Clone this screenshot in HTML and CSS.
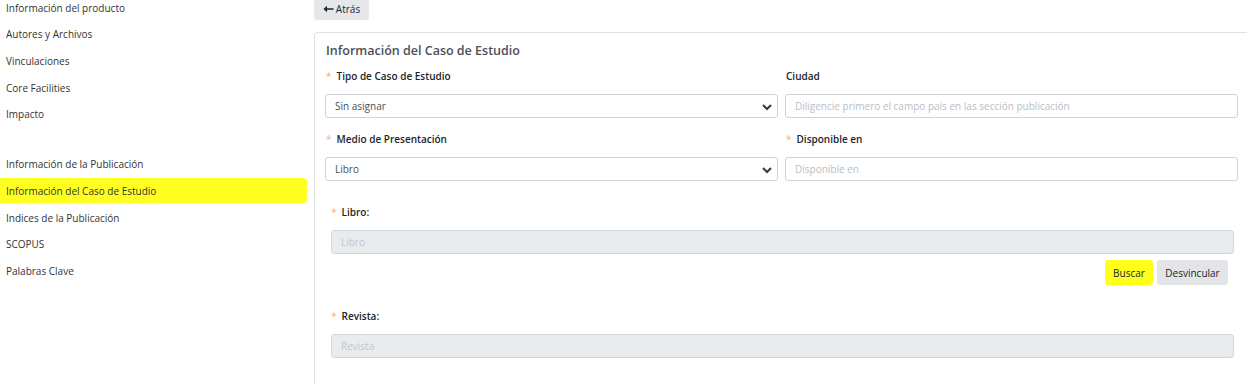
FILE: index.html
```html
<!DOCTYPE html>
<html lang="es">
<head>
<meta charset="utf-8">
<title>Información del Caso de Estudio</title>
<link rel="stylesheet" href="styles.css">
</head>
<body>
<div class="layout">
  <nav class="sidebar">
    <ul class="menu">
      <li class="menu-item">Información del producto</li>
      <li class="menu-item">Autores y Archivos</li>
      <li class="menu-item">Vinculaciones</li>
      <li class="menu-item">Core Facilities</li>
      <li class="menu-item">Impacto</li>
    </ul>
    <ul class="menu menu-second">
      <li class="menu-item">Información de la Publicación</li>
      <li class="menu-item active">Información del Caso de Estudio</li>
      <li class="menu-item">Indices de la Publicación</li>
      <li class="menu-item">SCOPUS</li>
      <li class="menu-item">Palabras Clave</li>
    </ul>
  </nav>
  <main class="main">
    <button class="btn-back"><svg class="arrow" width="11" height="8" viewBox="0 0 11 8"><path d="M0.5 4 L4 0.8 L4 3.2 L10.5 3.2 L10.5 4.8 L4 4.8 L4 7.2 Z" fill="#212529"/></svg>Atrás</button>
    <section class="card">
      <h2 class="card-title">Información del Caso de Estudio</h2>
      <div class="form-grid">
        <div class="field">
          <label class="label"><span class="req">*</span>Tipo de Caso de Estudio</label>
          <div class="select">
            <span>Sin asignar</span>
            <svg class="chev" width="10" height="8" viewBox="0 0 10 8"><path d="M1 2 L5 6 L9 2" fill="none" stroke="#343a40" stroke-width="2"/></svg>
          </div>
        </div>
        <div class="field">
          <label class="label">Ciudad</label>
          <div class="input"><span class="ph">Diligencie primero el campo país en las sección publicación</span></div>
        </div>
        <div class="field">
          <label class="label"><span class="req">*</span>Medio de Presentación</label>
          <div class="select">
            <span>Libro</span>
            <svg class="chev" width="10" height="8" viewBox="0 0 10 8"><path d="M1 2 L5 6 L9 2" fill="none" stroke="#343a40" stroke-width="2"/></svg>
          </div>
        </div>
        <div class="field">
          <label class="label"><span class="req">*</span>Disponible en</label>
          <div class="input"><span class="ph">Disponible en</span></div>
        </div>
      </div>
      <div class="block">
        <label class="label label-block"><span class="req">*</span>Libro:</label>
        <div class="input disabled"><span class="ph-dis">Libro</span></div>
        <div class="actions">
          <button class="btn btn-yellow">Buscar</button>
          <button class="btn btn-gray">Desvincular</button>
        </div>
      </div>
      <div class="block">
        <label class="label label-block"><span class="req">*</span>Revista:</label>
        <div class="input disabled"><span class="ph-dis">Revista</span></div>
      </div>
    </section>
  </main>
</div>
</body>
</html>
```
FILE: styles.css
```css
* { box-sizing: border-box; }
html, body { margin: 0; padding: 0; background: #fff; }
body {
  font-family: "Open Sans", "Noto Sans", sans-serif;
  font-size: 10px;
  color: #212529;
  height: 384px;
  overflow: hidden;
}
.layout {
  display: flex;
  gap: 7px;
  align-items: flex-start;
}
.sidebar {
  width: 307px;
  flex: none;
  margin-top: -5px;
}
.menu {
  list-style: none;
  margin: 0;
  padding: 0;
  display: flex;
  flex-direction: column;
  gap: 1.7px;
}
.menu-second { margin-top: 25px; }
.menu-item {
  height: 25px;
  padding: 0 6px;
  color: #333;
  display: flex;
  align-items: center;
}
.active {
  background: #ffff22;
  border-radius: 0 4px 4px 0;
}
.main {
  flex: 1;
  min-width: 0;
}
.btn-back {
  font: inherit;
  font-size: 10px;
  border: 0;
  background: #e5e7eb;
  color: #212529;
  height: 20px;
  width: 55px;
  padding: 0 0 3px;
  border-radius: 0 0 3px 3px;
  display: flex;
  align-items: center;
  justify-content: center;
  gap: 2px;
}
.card {
  margin-top: 12px;
  border: 1px solid #dfe1e5;
  border-right: 0;
  border-radius: 4px 0 0 0;
  padding: 9px 8px 20px 10px;
  height: 360px;
}
.card-title {
  margin: 0 0 0 1px;
  font-size: 12.5px;
  font-weight: 600;
  color: #495057;
  line-height: 18px;
}
.form-grid {
  display: grid;
  grid-template-columns: 453px 453px;
  column-gap: 7px;
  row-gap: 10px;
  margin-top: 5px;
}
.field { display: flex; flex-direction: column; }
.label {
  height: 22px;
  line-height: 22px;
  font-weight: 600;
  color: #212529;
  margin-bottom: 7px;
}
.field .label { padding-left: 1px; }
.req {
  color: #f2b27e;
  margin-right: 5px;
  font-weight: 400;
}
.select, .input {
  height: 24px;
  border: 1px solid #ced4da;
  border-radius: 3px;
  display: flex;
  align-items: center;
  padding: 0 9px;
  color: #495057;
  position: relative;
}
.chev { position: absolute; right: 5px; top: 8px; }
.ph { color: #b9bec5; }
.block { margin: 20px 5px 0 6px; }
.label-block { display: block; }
.disabled {
  background: #e9ecef;
  border-color: #d3d6da;
}
.ph-dis { color: #c3c7cc; }
.actions {
  display: flex;
  justify-content: flex-end;
  gap: 4px;
  margin-top: 6px;
  padding-right: 6px;
}
.btn {
  font: inherit;
  font-size: 10px;
  height: 25px;
  border: 0;
  border-radius: 3px;
  color: #212529;
  padding: 0;
}
.btn-yellow { background: #ffff1a; width: 48px; }
.btn-gray { background: #e2e4e8; width: 71px; }
```
